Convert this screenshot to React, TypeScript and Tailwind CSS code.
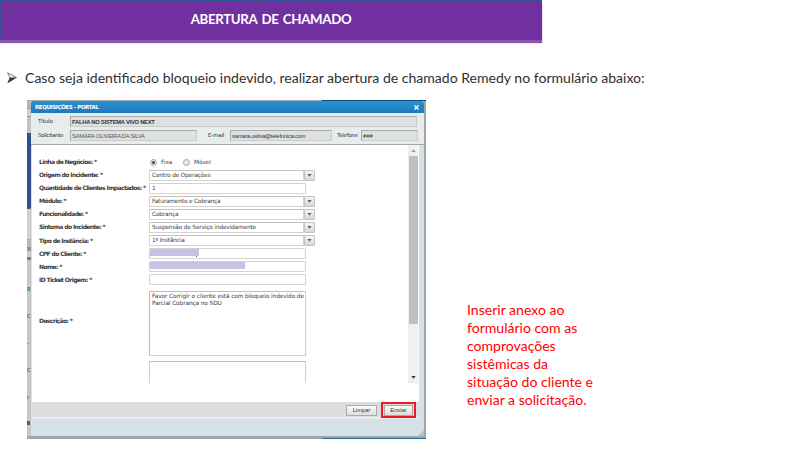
import React from "react";

const arial = "font-['Liberation_Sans',Arial,sans-serif]";
const verdana = "font-['DejaVu_Sans',Verdana,sans-serif]";

type Row = {
  label: string;
  kind: "select" | "input";
  value?: string;
  mask?: string;
};

const rows: Row[] = [
  { label: "Origem do Incidente: *", kind: "select", value: "Centro de Operações" },
  { label: "Quantidade de Clientes Impactados: *", kind: "input", value: "1" },
  { label: "Módulo: *", kind: "select", value: "Faturamento e Cobrança" },
  { label: "Funcionalidade: *", kind: "select", value: "Cobrança" },
  { label: "Sintoma do Incidente: *", kind: "select", value: "Suspensão do Serviço indevidamente" },
  { label: "Tipo de Instância: *", kind: "select", value: "1º Instância" },
  { label: "CPF do Cliente: *", kind: "input", mask: "w-[49px]" },
  { label: "Nome: *", kind: "input", mask: "w-[95px]" },
  { label: "ID Ticket Origem: *", kind: "input" },
];

function Triangle({ up = false, color = "#666" }: { up?: boolean; color?: string }) {
  return (
    <svg width="5" height="3" viewBox="0 0 5 3" className="block">
      <path d={up ? "M.3 3L2.5 .3L4.7 3Z" : "M.3 0H4.7L2.5 2.7Z"} fill={color} />
    </svg>
  );
}

function Radio({ checked = false }: { checked?: boolean }) {
  return (
    <span className="flex h-[7px] w-[7px] items-center justify-center rounded-full border border-[#a5a5a5] bg-[#e8e8e8]">
      {checked && <span className="h-[3px] w-[3px] rounded-full bg-[#444]" />}
    </span>
  );
}

function Field({ row }: { row: Row }) {
  return (
    <div className="flex h-[13.1px] items-center">
      <div className="w-[110px] shrink-0 text-[6px] leading-[10px] font-bold tracking-[-0.6px] whitespace-nowrap text-[#3a3a3a]">{row.label}</div>
      <div
        className={`flex h-[11px] items-center border border-[#d2d2d2] bg-white ${
          row.kind === "select" ? "w-[155px] border-t-[#c2c2c2]" : "w-[157px] rounded-[1px]"
        } ${row.mask ? "items-start" : "pl-[2px]"}`}
      >
        {row.mask && <span className={`h-[7px] bg-[#c9c0e6] ${row.mask}`} />}
        {row.label.startsWith("CPF") && <span className="mt-[7px] -ml-[3px] h-[1px] w-[1px] bg-[#555]" />}
        {row.value && <span className="text-[5.8px] leading-[9px] tracking-[-0.15px] whitespace-nowrap text-[#3c3c3c]">{row.value}</span>}
      </div>
      {row.kind === "select" && (
        <div className="flex h-[11px] w-[11px] items-center justify-center rounded-r-[1px] border border-[#c2c2c2] bg-linear-to-b from-[#f5f5f5] to-[#d8d8d8]">
          <Triangle />
        </div>
      )}
    </div>
  );
}

function ReadOnly({ children, className = "" }: { children: React.ReactNode; className?: string }) {
  return (
    <div className={`h-[11px] border border-[#c9cccc] border-t-[#a9acac] border-l-[#a9acac] bg-[#dfe1e1] pl-[1px] text-[5.8px] leading-[10px] whitespace-nowrap ${className}`}>
      {children}
    </div>
  );
}

function Backdrop() {
  return (
    <div className="flex w-[4px] flex-col text-[5px] leading-[6px] font-bold text-[#31688f]">
      <div className="h-[7px] bg-[#b5b5b5]" />
      <div className="h-[9px] border-y border-[#9b9b9b] bg-[#cfcfcf]" />
      <div className="h-[16px] bg-[#c4c4c4]" />
      <div className="h-[77px] rounded-br-[2px] bg-[#2f5191]" />
      <div className="h-[31px] bg-[#cdcfd1]" />
      <div className="h-[8px] border-t border-[#aaa] bg-[#b8bbbd]" />
      <div className="h-[4px] bg-[#8796a1]" />
      <div className="h-[6px] bg-[#cbcbcb]" />
      <div className="h-[3px] bg-[#6088a6]" />
      <div className="flex h-[178px] flex-col overflow-hidden bg-[#c6c7c8] pt-[26px]">
        <span className="h-[27px]">R</span>
        <span className="h-[27px]">C</span>
        <span className="h-[27px]">-</span>
        <span className="h-[27px]">C</span>
        <span className="h-[27px]">r</span>
        <span className="h-[4px] w-[3px] shrink-0 bg-[#31688f]" />
      </div>
    </div>
  );
}

function Portal() {
  return (
    <div className="flex h-[339px] w-[399px] flex-col overflow-hidden bg-[#a2a5a6]">
      <div className="flex h-[1px] shrink-0">
        <div className="w-[295px] bg-[#aaa]" />
        <div className="flex-1 bg-[#0c4d80]" />
      </div>
      <div className="flex h-[335px]">
        <Backdrop />
        <div className="flex w-[393px] flex-col bg-[#d5e0e7]">
          <div className={`flex h-[12px] shrink-0 items-center justify-between rounded-t-[2px] bg-linear-to-b from-[#2b92d2] to-[#1a7bbd] pr-[5px] pl-[4px] font-bold text-white ${verdana}`}>
            <span className="text-[5.5px] leading-[10px] tracking-[-0.4px]">REQUISIÇÕES - PORTAL</span>
            <svg width="5" height="5" viewBox="0 0 5 5"><path d="M.5.5L4.5 4.5M4.5.5L.5 4.5" stroke="#fff" strokeWidth="1.3" /></svg>
          </div>
          <div className={`flex h-[32px] shrink-0 flex-col gap-[3px] border-b border-[#a5a8a8] bg-[#e9ecec] pt-[3px] text-[#333] ${arial}`}>
            <div className="flex items-start">
              <span className={`w-[39px] pl-[7px] text-[5.6px] leading-[10px] tracking-[-0.15px] ${verdana}`}>Título</span>
              <ReadOnly className="w-[347px] font-bold tracking-[-0.25px]">FALHA NO SISTEMA VIVO NEXT</ReadOnly>
            </div>
            <div className="flex items-start">
              <span className={`w-[39px] pl-[7px] text-[5.5px] leading-[10px] tracking-[-0.35px] ${verdana}`}>Solicitante</span>
              <ReadOnly className="w-[127px] tracking-[-0.25px] text-[#555]">SAMARA OLIVEIRA DA SILVA</ReadOnly>
              <span className={`w-[33px] pl-[11px] text-[5.5px] leading-[10px] tracking-[-0.2px] ${verdana}`}>E-mail</span>
              <ReadOnly className="w-[102px] tracking-[-0.2px]">samara.osilva@telefonica.com</ReadOnly>
              <span className={`w-[29px] pl-[5px] text-[5.5px] leading-[10px] tracking-[-0.25px] ${verdana}`}>Telefone</span>
              <ReadOnly className="w-[57px]">###</ReadOnly>
            </div>
          </div>
          <div className="ml-[1px] flex h-[257px] w-[387px] shrink-0 bg-white">
            <div className={`h-[238px] flex-1 overflow-hidden pt-[10.5px] pl-[7px] text-[#3c3c3c] ${verdana}`}>
              <div className="flex h-[13px] items-center text-[5.7px] leading-[10px]">
                <span className="w-[111px] text-[6px] font-bold tracking-[-0.6px] text-[#3a3a3a]">Linha de Negócios: *</span>
                <Radio checked />
                <span className="w-[26px] pl-[4px]">Fixa</span>
                <Radio />
                <span className="pl-[4px]">Móvel</span>
              </div>
              {rows.map((r) => <Field key={r.label} row={r} />)}
              <div className="mt-[4.6px] flex items-start">
                <span className="w-[110px] pt-[25px] text-[6px] leading-[10px] font-bold tracking-[-0.6px] text-[#3a3a3a]">Descrição: *</span>
                <div className="h-[65px] w-[157px] rounded-[1px] border border-[#cfcfcf] border-t-[#bcbcbc] border-l-[#bcbcbc] pt-[1px] pl-[2px] text-[5.8px] leading-[7px] tracking-[-0.09px] whitespace-nowrap">
                  Favor Corrigir o cliente está com bloqueio indevido de
                  <br />
                  Parcial Cobrança no SDU
                </div>
              </div>
              <div className="mt-[5px] ml-[110px] h-[30px] w-[157px] border border-[#cfcfcf] border-t-[#bcbcbc]" />
            </div>
            <div className="mr-[1px] flex h-[238px] w-[10px] flex-col items-center bg-[#f0f0f0] pt-[4px]">
              <Triangle up color="#999" />
              <div className="mt-[4px] h-[168px] w-[9px] bg-[#c0c0c0]" />
              <div className="mt-auto pb-[4px]"><Triangle color="#333" /></div>
            </div>
          </div>
          <div className={`ml-[1px] flex h-[17px] w-[387px] shrink-0 items-start justify-end border-b-2 border-[#e9ecee] bg-[#dcdedd] text-[5.8px] text-[#333] ${arial}`}>
            <span className="mt-[3px] mr-[4px] flex h-[11px] w-[31px] items-center justify-center border border-[#a9a9a9] bg-linear-to-b from-[#fafafa] to-[#dedede]">Limpar</span>
            <span className="mr-[3px] flex h-[16px] w-[35px] shrink-0 items-center justify-center border-2 border-[#ed1c24] bg-[#dcdedd]">
              <span className="flex h-[11px] w-[29px] items-center justify-center border border-[#a9a9a9] bg-linear-to-b from-[#fafafa] to-[#dedede]">Enviar</span>
            </span>
          </div>
          <div className="flex flex-1 items-end justify-end">
            <svg width="6" height="6" viewBox="0 0 6 6"><path d="M6 0V6H0Z" fill="#b8c1c6" /></svg>
          </div>
        </div>
      </div>
      <div className="mt-auto flex h-[1px]">
        <div className="w-[295px]" />
        <div className="flex-1 bg-[#1d679c]" />
      </div>
    </div>
  );
}

export default function App() {
  return (
    <div className="h-[450px] w-[800px] overflow-hidden bg-white font-['Lato',Calibri,sans-serif]">
      <header className="flex h-[40px] w-[542px] items-center justify-center border border-[#2f528f] bg-[#7030a0] text-[13.3px] font-bold text-white shadow-[0_3px_1px_#7030a0d0]">
        <h1 className="tracking-[-0.35px] [word-spacing:1.5px]">ABERTURA DE CHAMADO</h1>
      </header>
      <div className="flex h-[60px] items-start pt-[28px] pl-[7px] text-[14.06px] leading-[20px] text-[#303030]">
        <svg width="11" height="12" viewBox="0 0 11 12" className="mt-[4px] mr-[7px]">
          <path d="M.5.8L9.5 5.5L.8 10.8L3.2 5.5Z" fill="none" stroke="#444" strokeWidth=".7" />
          <path d="M3 5.5H9.5L.8 10.8Z" fill="#333" />
        </svg>
        <p className="whitespace-nowrap">Caso seja identificado bloqueio indevido, realizar abertura de chamado Remedy no formulário abaixo:</p>
      </div>
      <main className="flex items-start pl-[27px]">
        <Portal />
        <p className="mt-[201px] ml-[41px] text-[14.06px] leading-[18px] whitespace-nowrap text-[#f00]">
          Inserir anexo ao<br />formulário com as<br />comprovações<br />sistêmicas da<br />situação do cliente e<br />enviar a solicitação.
        </p>
      </main>
    </div>
  );
}
